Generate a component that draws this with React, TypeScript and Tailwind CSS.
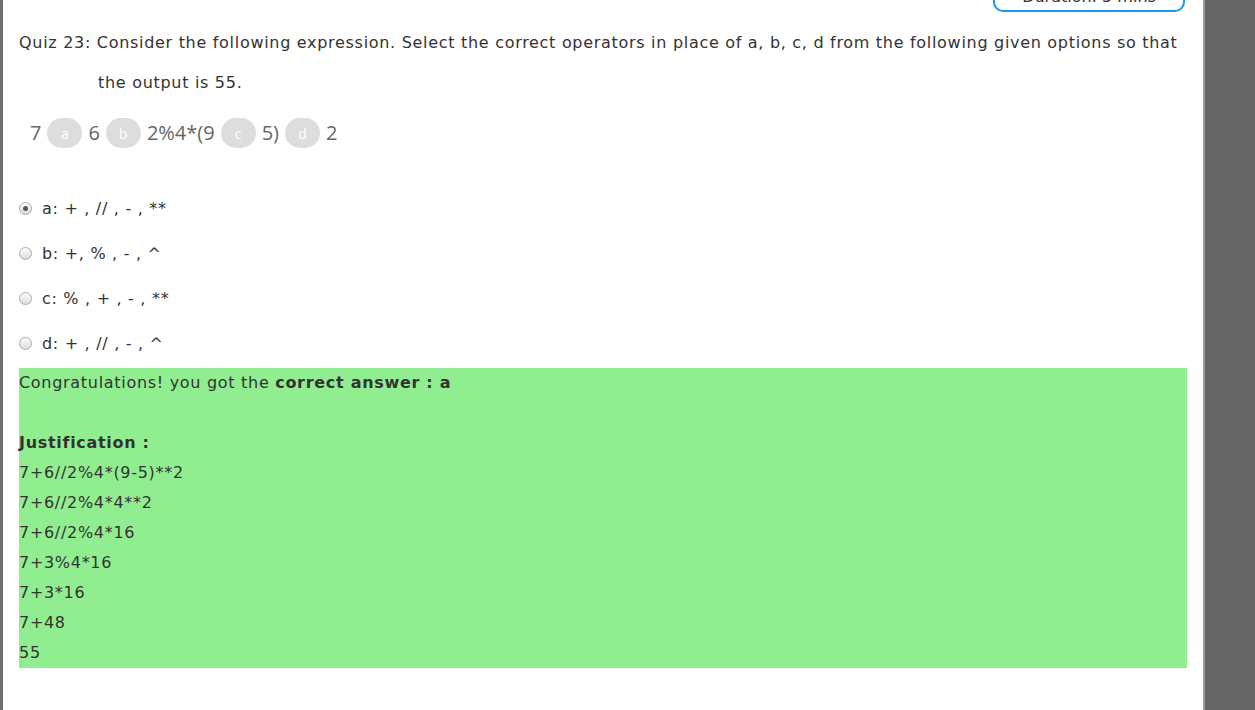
const options = [
  { key: 'a', text: 'a: + , // , - , **', checked: true },
  { key: 'b', text: 'b: +, % , - , ^', checked: false },
  { key: 'c', text: 'c: % , + , - , **', checked: false },
  { key: 'd', text: 'd: + , // , - , ^', checked: false },
]

const steps = ['7+6//2%4*(9-5)**2', '7+6//2%4*4**2', '7+6//2%4*16', '7+3%4*16', '7+3*16', '7+48', '55']

function Blank({ letter }: { letter: string }) {
  return (
    <span className="mx-[6px] inline-flex h-[30px] w-[35px] items-center justify-center rounded-full bg-[#dddddd] text-[14px] text-white">
      {letter}
    </span>
  )
}

function Radio({ checked }: { checked: boolean }) {
  return (
    <span className="flex h-[13px] w-[13px] items-center justify-center rounded-full border border-[#a9a9a9] bg-gradient-to-b from-[#fdfdfd] to-[#dcdcdc]">
      {checked && <span className="h-[5px] w-[5px] rounded-full bg-[#555]" />}
    </span>
  )
}

export default function App() {
  return (
    <div className="flex h-[710px] w-[1255px] overflow-hidden bg-[#666666] font-['DejaVu_Sans',Verdana,sans-serif] tracking-[0.7px] text-[#333]">
      <div className="w-[3px] shrink-0 bg-[#6d6d6d]" />
      <main className="w-[1200px] shrink-0 overflow-hidden bg-white px-4">
        {/* Timer */}
        <div className="flex justify-end pr-[2px]">
          <div className="-mt-[18px] flex h-[30px] w-[192px] items-center justify-center rounded-[10px] border-2 border-[#1a98f0] text-[16px] tracking-normal">
            Duration: 5 mins
          </div>
        </div>

        {/* Question */}
        <div className="mt-[11px] pl-[79px] -indent-[79px] text-[16px] leading-[40px] text-[#333]">
          Quiz 23: Consider the following expression. Select the correct operators in place of a, b, c, d from the following given options so that the output is 55.
        </div>

        <div className="mt-[15px] flex items-center pl-[11px] font-['Open_Sans',sans-serif] text-[20px] tracking-normal text-[#666]">
          <span>7</span>
          <Blank letter="a" />
          <span>6</span>
          <Blank letter="b" />
          <span>2%4*(9</span>
          <Blank letter="c" />
          <span>5)</span>
          <Blank letter="d" />
          <span>2</span>
        </div>

        {/* Options */}
        <div className="mt-[38px] flex flex-col">
          {options.map((o) => (
            <label key={o.key} className="flex h-[45px] items-center gap-[10px] text-[16px]">
              <Radio checked={o.checked} />
              <span>{o.text}</span>
            </label>
          ))}
        </div>

        {/* Result */}
        <div className="mt-[2px] bg-[#90ee90] text-[16px] leading-[30px] text-[#333]">
          <div>
            Congratulations! you got the <b>correct answer : a</b>
          </div>
          <div className="h-[30px]" />
          <div className="font-bold">Justification :</div>
          {steps.map((s) => (
            <div key={s}>{s}</div>
          ))}
        </div>
      </main>
      <div className="w-[2px] shrink-0 bg-[#9a9a9a]" />
    </div>
  )
}
